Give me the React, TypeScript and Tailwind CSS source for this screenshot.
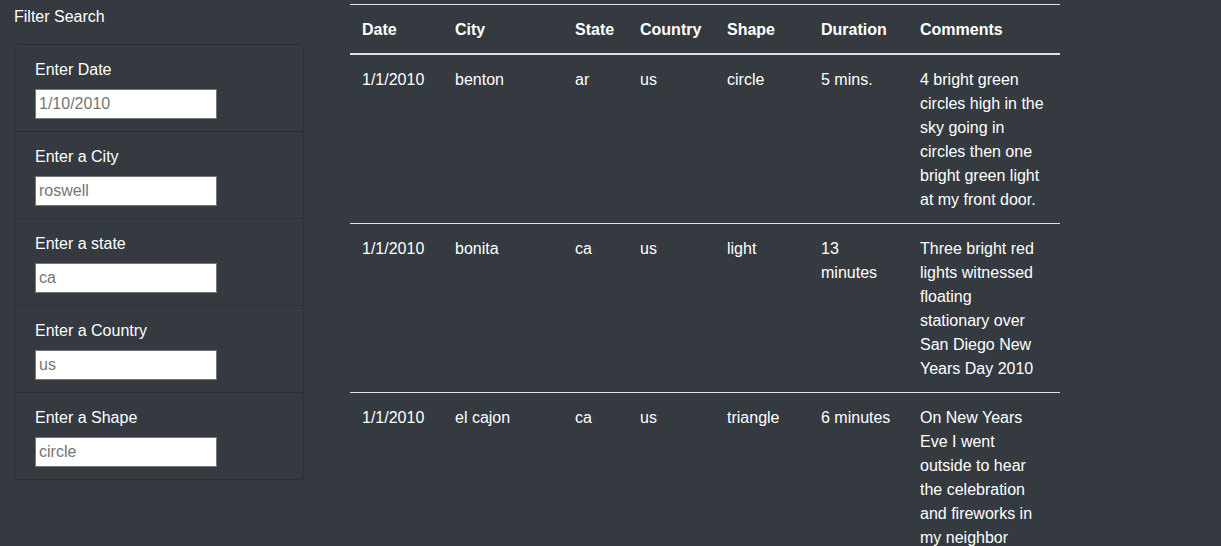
import React from 'react';

const FILTERS = [
    { id: 'datetime', label: 'Enter Date', placeholder: '1/10/2010' },
    { id: 'city', label: 'Enter a City', placeholder: 'roswell' },
    { id: 'state', label: 'Enter a state', placeholder: 'ca' },
    { id: 'country', label: 'Enter a Country', placeholder: 'us' },
    { id: 'shape', label: 'Enter a Shape', placeholder: 'circle' },
];

const SIGHTINGS = [
    {
        date: '1/1/2010',
        city: 'benton',
        state: 'ar',
        country: 'us',
        shape: 'circle',
        duration: '5 mins.',
        comments: '4 bright green circles high in the sky going in circles then one bright green light at my front door.',
    },
    {
        date: '1/1/2010',
        city: 'bonita',
        state: 'ca',
        country: 'us',
        shape: 'light',
        duration: '13 minutes',
        comments: 'Three bright red lights witnessed floating stationary over San Diego New Years Day 2010',
    },
    {
        date: '1/1/2010',
        city: 'el cajon',
        state: 'ca',
        country: 'us',
        shape: 'triangle',
        duration: '6 minutes',
        comments: 'On New Years Eve I went outside to hear the celebration and fireworks in my neighbor hood when I looked up and saw a triangle of lights.',
    },
];

const App = () => {
    return (
        <div className="min-h-screen bg-[#343a40] text-white font-['Liberation_Sans',Arial,sans-serif] text-base leading-6">
            <div className="flex items-start pt-1">
                <aside className="w-[290px] ml-[14px] shrink-0">
                    <h5 className="text-base leading-6 mt-px mb-[15px]">Filter Search</h5>
                    <ul className="border border-[#2c3136] rounded">
                        {FILTERS.map((f, i) => (
                            <li
                                key={f.id}
                                className={`px-5 pt-[13px] pb-3 ${i > 0 ? 'border-t border-[#2c3136]' : ''}`}
                            >
                                <label htmlFor={f.id} className="block mb-[7px]">{f.label}</label>
                                <input
                                    id={f.id}
                                    type="text"
                                    placeholder={f.placeholder}
                                    className="block w-[182px] h-[30px] bg-white border border-[#767676] px-[3px] text-base text-black placeholder:text-[#757575] outline-none"
                                />
                            </li>
                        ))}
                    </ul>
                </aside>
                <main className="ml-[46px] w-[710px]">
                    <table className="w-full table-fixed border-collapse text-left">
                        <colgroup>
                            <col className="w-[93px]" />
                            <col className="w-[120px]" />
                            <col className="w-[65px]" />
                            <col className="w-[87px]" />
                            <col className="w-[94px]" />
                            <col className="w-[99px]" />
                            <col className="w-[152px]" />
                        </colgroup>
                        <thead>
                            <tr className="border-t border-[#dee2e6]">
                                {['Date', 'City', 'State', 'Country', 'Shape', 'Duration', 'Comments'].map((h) => (
                                    <th key={h} className="px-3 pt-[13px] pb-[11px] font-bold align-bottom border-b-2 border-[#dee2e6]">{h}</th>
                                ))}
                            </tr>
                        </thead>
                        <tbody>
                            {SIGHTINGS.map((s, i) => (
                                <tr key={i} className={i > 0 ? 'border-t border-[#dee2e6]' : ''}>
                                    <td className="px-3 pt-[13px] pb-[11px] align-top">{s.date}</td>
                                    <td className="px-3 pt-[13px] pb-[11px] align-top">{s.city}</td>
                                    <td className="px-3 pt-[13px] pb-[11px] align-top">{s.state}</td>
                                    <td className="px-3 pt-[13px] pb-[11px] align-top">{s.country}</td>
                                    <td className="px-3 pt-[13px] pb-[11px] align-top">{s.shape}</td>
                                    <td className="px-3 pt-[13px] pb-[11px] align-top">{s.duration}</td>
                                    <td className="pl-3 pr-[15.5px] pt-[13px] pb-[11px] align-top">{s.comments}</td>
                                </tr>
                            ))}
                        </tbody>
                    </table>
                </main>
            </div>
        </div>
    );
};

export default App;
